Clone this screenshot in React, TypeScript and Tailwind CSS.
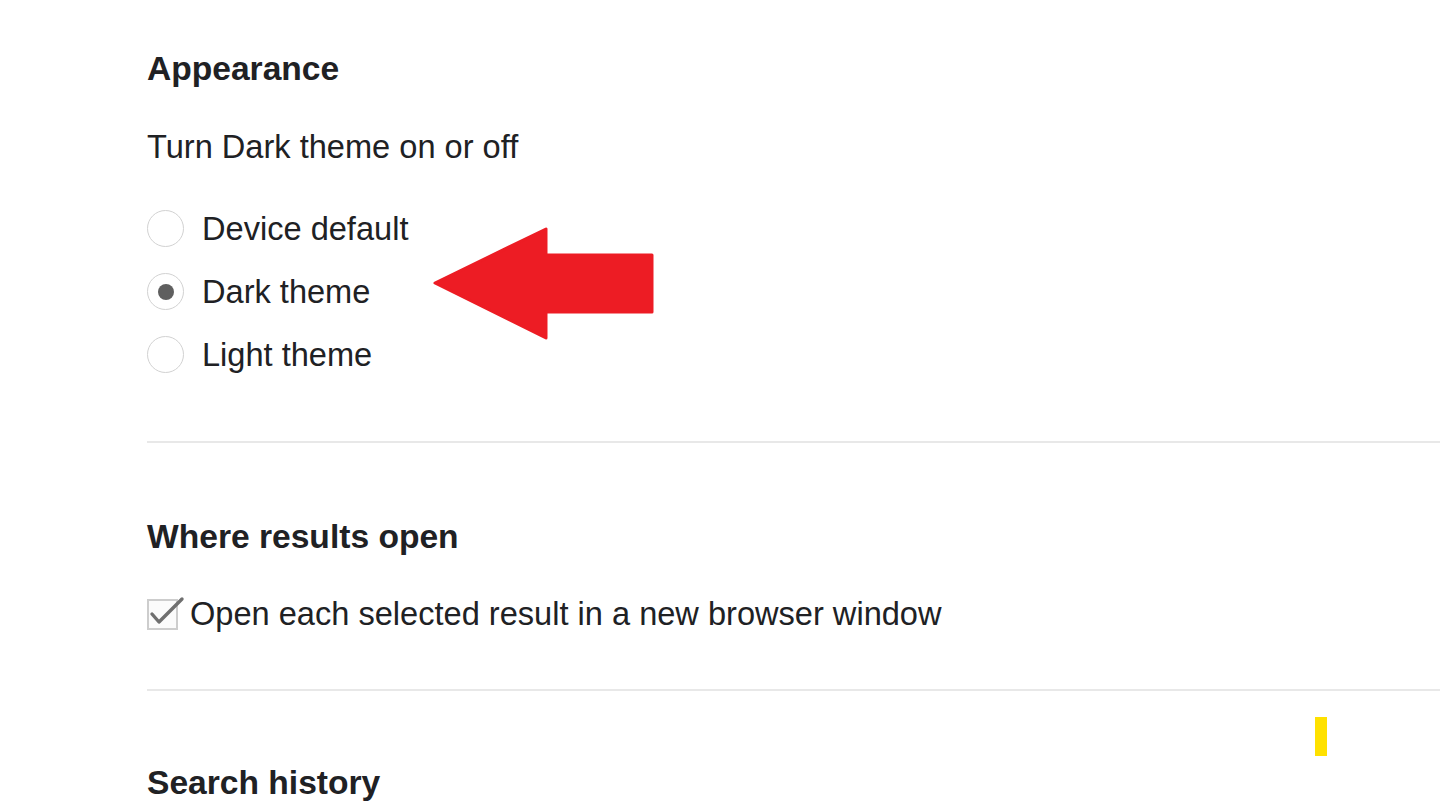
import React from 'react';

const font = { fontFamily: '"Liberation Sans", Arial, sans-serif' };

function Radio({ label, checked }: { label: string; checked?: boolean }) {
  return (
    <div className="flex h-[63px] items-center gap-[18px]">
      <span className="flex h-[37px] w-[37px] items-center justify-center rounded-full border-[1.5px] border-[#d2d2d2] bg-white">
        {checked && <span className="h-[16px] w-[16px] rounded-full bg-[#5f5f5f]" />}
      </span>
      <span className="text-[32.6px] leading-[40px] text-[#202124]">{label}</span>
    </div>
  );
}

function Divider() {
  return <div className="h-[2px] w-full bg-[#e8e8e8]" />;
}

export default function App() {
  return (
    <div className="relative min-h-[810px] w-full overflow-hidden bg-white" style={font}>
      <div className="pl-[147px] pt-[49px]">
        <h2 className="text-[33.6px] font-bold leading-[40px] text-[#202124]">Appearance</h2>
        <p className="mt-[38px] text-[32.6px] leading-[40px] text-[#202124]">Turn Dark theme on or off</p>

        <div className="mt-[30px] flex flex-col">
          <Radio label="Device default" />
          <Radio label="Dark theme" checked />
          <Radio label="Light theme" />
        </div>

        <div className="mt-[55px]">
          <Divider />
        </div>

        <h2 className="mt-[74px] text-[33.6px] font-bold leading-[40px] text-[#202124]">Where results open</h2>

        <div className="mt-[37px] flex h-[40px] items-center gap-[12px]">
          <span className="relative h-[31px] w-[31px] border-2 border-[#cdcdcd] bg-[#fbfbfb]">
            <svg
              className="absolute left-0 top-[-4px] overflow-visible"
              width="36"
              height="32"
              viewBox="0 0 36 32"
            >
              <polyline
                points="3,17 10,25 33,2"
                fill="none"
                stroke="#6f6f6f"
                strokeWidth="3.4"
                strokeLinecap="round"
                strokeLinejoin="round"
              />
            </svg>
          </span>
          <span className="text-[32.6px] leading-[40px] text-[#202124]">
            Open each selected result in a new browser window
          </span>
        </div>

        <div className="mt-[55px]">
          <Divider />
        </div>

        <h2 className="mt-[72px] text-[33.6px] font-bold leading-[40px] text-[#202124]">Search history</h2>
      </div>

      {/* annotation arrow */}
      <svg className="absolute left-[430px] top-[225px]" width="230" height="120" viewBox="0 0 230 120">
        <polygon
          points="5,58 116,4 116,30 222,30 222,87 116,87 116,113"
          fill="#ed1c24"
          stroke="#ed1c24"
          strokeWidth="3"
          strokeLinejoin="round"
        />
      </svg>

      {/* yellow marker */}
      <div className="absolute left-[1315px] top-[717px] h-[39px] w-[12px] bg-[#ffe100]" />
    </div>
  );
}
